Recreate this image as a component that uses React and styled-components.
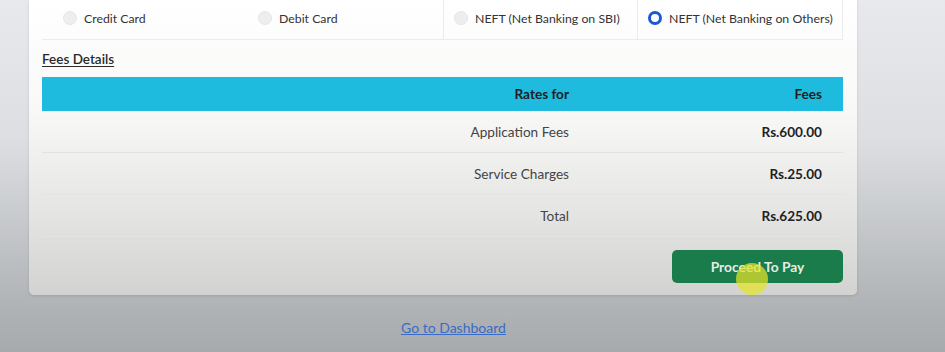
import React, { useState } from 'react';
import styled, { createGlobalStyle } from 'styled-components';

const GlobalStyle = createGlobalStyle`
  html, body {
    margin: 0;
    padding: 0;
  }
  body {
    font-family: Lato, "Open Sans", sans-serif;
    background: linear-gradient(#e7e9ed 0%, #dcdee1 40%, #b2b5b8 85%, #a7aaad 100%);
    min-height: 352px;
    overflow: hidden;
  }
`;

const methods = [
  { id: 'cc', label: 'Credit Card', width: 198, pad: 21 },
  { id: 'dc', label: 'Debit Card', width: 203, pad: 18 },
  { id: 'sbi', label: 'NEFT (Net Banking on SBI)', width: 194, pad: 10, line: true },
  { id: 'oth', label: 'NEFT (Net Banking on Others)', width: 206, pad: 10, line: true },
];

const fees = [
  { label: 'Application Fees', amount: 'Rs.600.00' },
  { label: 'Service Charges', amount: 'Rs.25.00' },
  { label: 'Total', amount: 'Rs.625.00' },
];

const App = () => {
  const [method, setMethod] = useState('oth');
  return (
    <>
      <GlobalStyle />
      <Page>
        <Card>
          <MethodRow>
            {methods.map((m) => (
              <MethodCell key={m.id} $width={m.width} $pad={m.pad} $line={m.line} onClick={() => setMethod(m.id)}>
                <Radio $checked={method === m.id} />
                <span>{m.label}</span>
              </MethodCell>
            ))}
          </MethodRow>

          <SectionTitle>Fees Details</SectionTitle>

          <FeesTable>
            <HeadRow>
              <Cell $bold>Rates for</Cell>
              <Cell $bold>Fees</Cell>
            </HeadRow>
            {fees.map((f) => (
              <BodyRow key={f.label}>
                <Cell>{f.label}</Cell>
                <Cell $bold>{f.amount}</Cell>
              </BodyRow>
            ))}
          </FeesTable>

          <Actions>
            <PayButton>
              Proceed To Pay
              <Pointer />
            </PayButton>
          </Actions>
        </Card>

        <Footer>
          <DashLink href="#">Go to Dashboard</DashLink>
        </Footer>
      </Page>
    </>
  );
};

const Page = styled.div`
  width: 828px;
  padding-left: 29px;
`;

const Card = styled.div`
  background: linear-gradient(#ffffff 0%, #f8f8f7 38%, #e6e7e5 70%, #d2d3d1 100%);
  border-radius: 0 0 5px 5px;
  box-shadow: 0 1px 3px rgba(0, 0, 0, 0.12);
  padding: 0 14px 12px 13px;
`;

const MethodRow = styled.div`
  display: flex;
  height: 39px;
  border-bottom: 1px solid #ececec;
`;

const MethodCell = styled.label`
  display: flex;
  align-items: center;
  gap: 7px;
  width: ${(p) => p.$width}px;
  box-sizing: border-box;
  padding: 0 0 3px ${(p) => p.$pad}px;
  border-left: ${(p) => (p.$line ? '1px solid #ececec' : 'none')};
  font-size: 12.3px;
  color: #333;
  cursor: pointer;
  &:last-child {
    border-right: 1px solid #ececec;
  }
`;

const Radio = styled.span`
  width: 14px;
  height: 14px;
  box-sizing: border-box;
  border-radius: 50%;
  flex-shrink: 0;
  background: ${(p) => (p.$checked ? '#fff' : '#eeeeee')};
  border: ${(p) => (p.$checked ? '3.5px solid #1b57d8' : '1px solid #e6e6e6')};
`;

const SectionTitle = styled.div`
  margin: 11px 0 10px;
  font-size: 13.5px;
  font-weight: 600;
  color: #2a2a2a;
  text-decoration: underline;
  text-underline-offset: 2px;
  line-height: 16px;
`;

const FeesTable = styled.div`
  display: flex;
  flex-direction: column;
`;

const HeadRow = styled.div`
  display: grid;
  grid-template-columns: 548px 1fr;
  height: 34px;
  align-items: center;
  background: #1fbbdf;
  color: #1c1c1c;
`;

const BodyRow = styled.div`
  display: grid;
  grid-template-columns: 548px 1fr;
  height: 42px;
  align-items: center;
  border-bottom: 1px solid #e3e3e1;
  box-sizing: border-box;
  color: #444;
`;

const Cell = styled.div`
  text-align: right;
  padding-right: 21px;
  font-size: 13.6px;
  font-weight: ${(p) => (p.$bold ? 700 : 400)};
  color: ${(p) => (p.$bold ? '#1f1f1f' : 'inherit')};
`;

const Actions = styled.div`
  display: flex;
  justify-content: flex-end;
  margin-top: 13px;
`;

const PayButton = styled.button`
  position: relative;
  width: 171px;
  height: 33px;
  border: none;
  border-radius: 5px;
  background: #1a7b4b;
  color: #e3ece5;
  font-family: Lato, "Open Sans", sans-serif;
  font-size: 13.8px;
  font-weight: 700;
  cursor: pointer;
`;

const Pointer = styled.span`
  position: absolute;
  left: 64px;
  top: 13px;
  width: 32px;
  height: 32px;
  border-radius: 50%;
  background: rgba(228, 228, 40, 0.72);
  pointer-events: none;
`;

const Footer = styled.div`
  padding: 22px 0 0 372px;
`;

const DashLink = styled.a`
  font-size: 14px;
  color: #3a6cc6;
  text-decoration: underline;
`;

export default App;
